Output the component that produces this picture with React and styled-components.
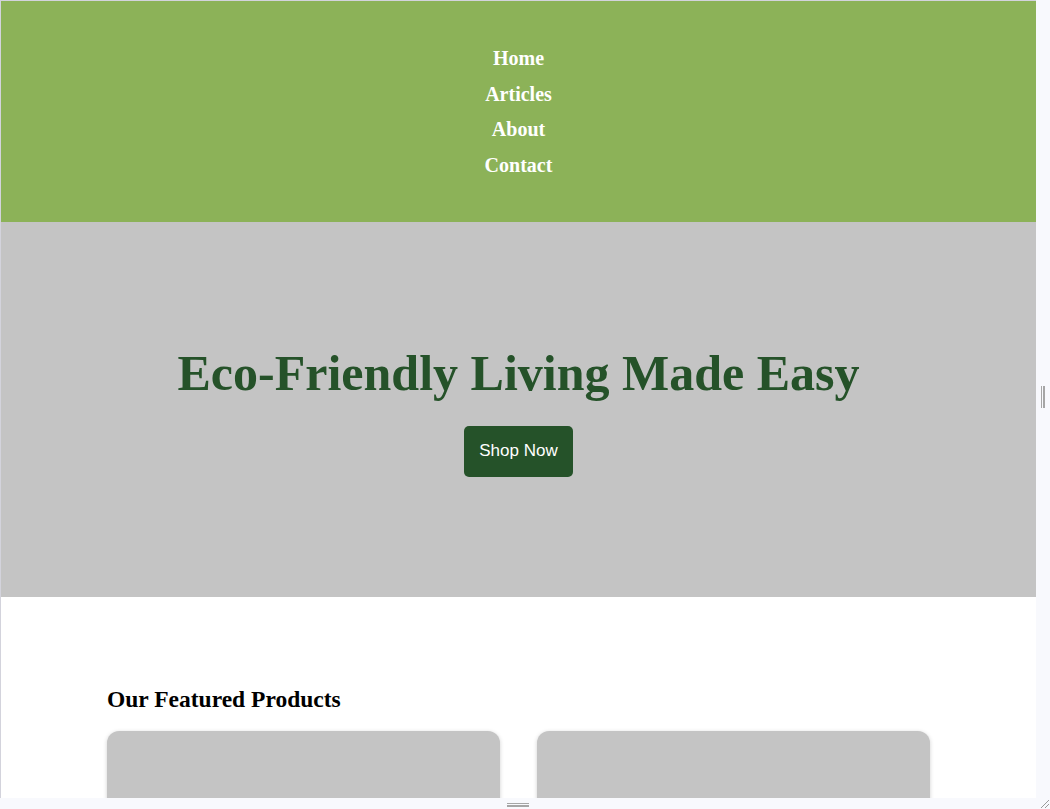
import React from "react";
import styled, { createGlobalStyle } from "styled-components";

const GlobalStyle = createGlobalStyle`
  html, body {
    margin: 0;
    padding: 0;
    height: 100%;
    overflow: hidden;
    background: #f8f9fd;
  }
  #root {
    height: 100%;
  }
  * {
    box-sizing: border-box;
  }
`;

const navItems = ["Home", "Articles", "About", "Contact"];

const App = () => {
  return (
    <>
      <GlobalStyle />
      <Frame>
        <Viewport>
          <Header>
            <NavList>
              {navItems.map((item) => (
                <NavItem key={item}>
                  <NavLink href="#">{item}</NavLink>
                </NavItem>
              ))}
            </NavList>
          </Header>

          <Hero>
            <HeroTitle>Eco-Friendly Living Made Easy</HeroTitle>
            <ShopButton>Shop Now</ShopButton>
          </Hero>

          <Featured>
            <FeaturedInner>
              <SectionTitle>Our Featured Products</SectionTitle>
              <ProductGrid>
                <ProductCard />
                <ProductCard />
              </ProductGrid>
            </FeaturedInner>
          </Featured>
        </Viewport>

        <SideGutter>
          <VerticalGrip />
        </SideGutter>
        <BottomGutter>
          <HorizontalGrip />
        </BottomGutter>
        <Corner>
          <svg width="12" height="10" viewBox="0 0 12 10">
            <line x1="3" y1="9" x2="11" y2="1" stroke="#9a9a9a" strokeWidth="1" />
            <line x1="7" y1="9" x2="11" y2="5" stroke="#9a9a9a" strokeWidth="1" />
          </svg>
        </Corner>
      </Frame>
    </>
  );
};

const Frame = styled.div`
  display: grid;
  grid-template-columns: 1036px 14px;
  grid-template-rows: 798px 11px;
  width: 1050px;
  height: 809px;
  background: #f8f9fd;
`;

const Viewport = styled.div`
  overflow: hidden;
  background: #ffffff;
  border-left: 1px solid #d3d3dc;
  border-top: 1px solid #d3d3dc;
  font-family: "Liberation Serif", "Times New Roman", serif;
`;

const SideGutter = styled.div`
  display: flex;
  align-items: center;
  justify-content: center;
  background: #f8f9fd;
`;

const VerticalGrip = styled.div`
  width: 4px;
  height: 22px;
  border-left: 1px solid #a6a6a6;
  border-right: 2px solid #a6a6a6;
  margin-top: -4px;
`;

const BottomGutter = styled.div`
  display: flex;
  align-items: center;
  justify-content: center;
  background: #f8f9fd;
`;

const HorizontalGrip = styled.div`
  width: 22px;
  height: 4px;
  border-top: 1px solid #a6a6a6;
  border-bottom: 2px solid #a6a6a6;
  margin-top: 3px;
`;

const Corner = styled.div`
  display: flex;
  align-items: flex-end;
  justify-content: flex-end;
  background: #f8f9fd;
`;

const Header = styled.header`
  display: flex;
  align-items: center;
  justify-content: center;
  height: 221px;
  padding-top: 1px;
  background: #8cb258;
`;

const NavList = styled.ul`
  display: flex;
  flex-direction: column;
  align-items: center;
  gap: 12.6px;
  margin: 0;
  padding: 0;
  list-style: none;
`;

const NavItem = styled.li`
  font-size: 20px;
  line-height: 23px;
`;

const NavLink = styled.a`
  color: #ffffff;
  font-weight: bold;
  text-decoration: none;
`;

const Hero = styled.section`
  display: flex;
  flex-direction: column;
  align-items: center;
  justify-content: center;
  height: 375px;
  padding-top: 2px;
  background: #c4c4c4;
`;

const HeroTitle = styled.h1`
  margin: 0 0 25px;
  color: #255229;
  font-size: 50px;
  line-height: 56px;
  font-weight: bold;
`;

const ShopButton = styled.button`
  padding: 15px 15px 16px;
  border: none;
  border-radius: 5px;
  background: #255229;
  color: #ffffff;
  font-family: "Liberation Sans", Arial, sans-serif;
  font-size: 17px;
  line-height: 20px;
  cursor: pointer;
`;

const Featured = styled.section`
  padding-top: 88px;
`;

const FeaturedInner = styled.div`
  width: 823px;
  margin: 0 auto;
`;

const SectionTitle = styled.h2`
  margin: 0 0 18px;
  font-size: 23.5px;
  line-height: 28px;
  font-weight: bold;
  color: #000000;
`;

const ProductGrid = styled.div`
  display: grid;
  grid-template-columns: 1fr 1fr;
  gap: 37px;
`;

const ProductCard = styled.div`
  height: 320px;
  border-radius: 12px;
  background: #c4c4c4;
  box-shadow: 0 1px 4px rgba(0, 0, 0, 0.18);
`;

export default App;
